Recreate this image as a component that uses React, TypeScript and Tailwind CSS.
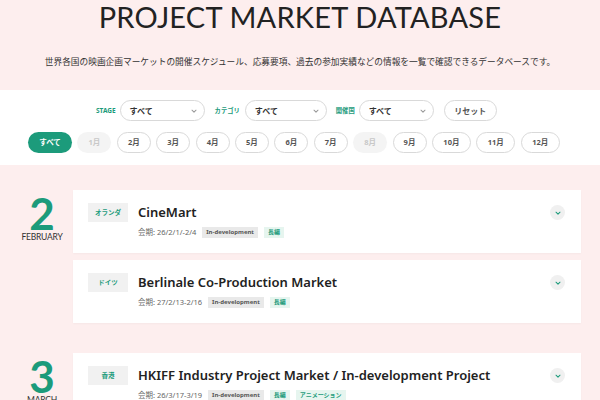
import React from "react";

const teal = "text-[#1c9b7b]";

const months = [
  { label: "1月", disabled: true },
  { label: "2月" },
  { label: "3月" },
  { label: "4月" },
  { label: "5月" },
  { label: "6月" },
  { label: "7月" },
  { label: "8月", disabled: true },
  { label: "9月" },
  { label: "10月", wide: true },
  { label: "11月", wide: true },
  { label: "12月", wide: true },
];

const groups = [
  {
    day: "2",
    month: "FEBRUARY",
    items: [
      { country: "オランダ", title: "CineMart", date: "会期: 26/2/1/-2/4", tags: ["長編"] },
      { country: "ドイツ", title: "Berlinale Co-Production Market", date: "会期: 27/2/13-2/16", tags: ["長編"] },
    ],
  },
  {
    day: "3",
    month: "MARCH",
    items: [
      {
        country: "香港",
        title: "HKIFF Industry Project Market / In-development Project",
        date: "会期: 26/3/17-3/19",
        tags: ["長編", "アニメーション"],
      },
    ],
  },
];

const Chevron = ({ className }: any) => (
  <svg viewBox="0 0 10 10" className={className} fill="none" stroke="currentColor" strokeWidth="1.3">
    <path d="M2.5 4 L5 6.5 L7.5 4" strokeLinecap="round" strokeLinejoin="round" />
  </svg>
);

const Select = ({ width }: any) => (
  <div
    className={`flex h-[21px] items-center justify-between rounded-full border border-[#d9d9d9] bg-white pl-[9px] pr-[6px] ${width}`}
  >
    <span className="text-[8px] font-bold text-[#333]">すべて</span>
    <Chevron className="h-[8px] w-[8px] text-[#999]" />
  </div>
);

const Card = ({ item }: any) => (
  <div className="flex h-[63px] items-start bg-white pl-[15px] pr-[16px] pt-[13px] shadow-[0_1px_2px_rgba(0,0,0,0.03)]">
    <div className={`flex h-[19px] w-[40px] shrink-0 items-center justify-center bg-[#f1f1f1] text-[6.5px] font-bold ${teal}`}>
      {item.country}
    </div>
    <div className="ml-[10px] flex-1">
      <div className="text-[13px] font-semibold leading-[19px] text-[#222]">{item.title}</div>
      <div className="mt-[5px] flex items-center gap-[6px]">
        <span className="text-[7.5px] text-[#666]">{item.date}</span>
        <span className="flex h-[11px] items-center bg-[#e9e9e9] px-[4px] text-[6px] font-bold text-[#555]">
          In-development
        </span>
        {item.tags.map((t: string) => (
          <span key={t} className={`flex h-[11px] items-center bg-[#e6f5ef] px-[4px] text-[6px] font-bold ${teal}`}>
            {t}
          </span>
        ))}
      </div>
    </div>
    <div className="mt-[2px] flex h-[15px] w-[15px] items-center justify-center rounded-full bg-[#f0f0f0]">
      <Chevron className={`h-[8px] w-[8px] ${teal}`} />
    </div>
  </div>
);

export default function App() {
  return (
    <div className="h-[400px] w-[600px] overflow-hidden bg-[#fdeeee] font-['Noto_Sans','Noto_Sans_CJK_JP',sans-serif]">
      <div className="h-[90px] text-center">
        <div className="font-['Lato',sans-serif] text-[29px] leading-[33px] tracking-[0.2px] text-[#222]">
          PROJECT MARKET DATABASE
        </div>
        <div className="mt-[23px] text-[8.7px] text-[#333]">
          世界各国の映画企画マーケットの開催スケジュール、応募要項、過去の参加実績などの情報を一覧で確認できるデータベースです。
        </div>
      </div>

      <div className="h-[75px] bg-white pt-[10px]">
        <div className="flex items-center pl-[96px]">
          <span className={`mr-[4px] text-[6.5px] font-bold ${teal}`}>STAGE</span>
          <Select width="w-[85px]" />
          <span className={`ml-[10px] mr-[5px] text-[6.3px] font-bold ${teal}`}>カテゴリ</span>
          <Select width="w-[82px]" />
          <span className={`ml-[9px] mr-[4px] text-[6.3px] font-bold ${teal}`}>開催国</span>
          <Select width="w-[75px]" />
          <div className="ml-[10px] flex h-[21px] w-[53px] items-center justify-center rounded-full border border-[#d9d9d9] text-[8px] font-bold text-[#555]">
            リセット
          </div>
        </div>
        <div className="mt-[11px] flex items-center gap-[5.4px] pl-[28px]">
          <div className="flex h-[21px] w-[44px] items-center justify-center rounded-full bg-[#1c9b7b] text-[7.5px] font-bold text-white">
            すべて
          </div>
          {months.map((m) => (
            <div
              key={m.label}
              className={`flex h-[21px] items-center justify-center rounded-full text-[7.5px] font-bold ${
                m.wide ? "w-[39px]" : "w-[34px]"
              } ${m.disabled ? "bg-[#f4f4f4] text-[#c8c8c8]" : "border border-[#d9d9d9] text-[#555]"}`}
            >
              {m.label}
            </div>
          ))}
        </div>
      </div>

      <div className="flex flex-col gap-[30px] pt-[25px]">
        {groups.map((g) => (
          <div key={g.day} className="flex">
            <div className="flex w-[73px] shrink-0 flex-col items-center pl-[11px] pt-[6px]">
              <div className={`font-['Lato',sans-serif] text-[44px] font-bold leading-[34px] ${teal}`}>{g.day}</div>
              <div className="mt-[2px] font-['Lato',sans-serif] text-[8.5px] leading-[10px] tracking-[-0.2px] text-[#333]">
                {g.month}
              </div>
            </div>
            <div className="mr-[19px] flex flex-1 flex-col gap-[7px]">
              {g.items.map((it) => (
                <Card key={it.title} item={it} />
              ))}
            </div>
          </div>
        ))}
      </div>
    </div>
  );
}
